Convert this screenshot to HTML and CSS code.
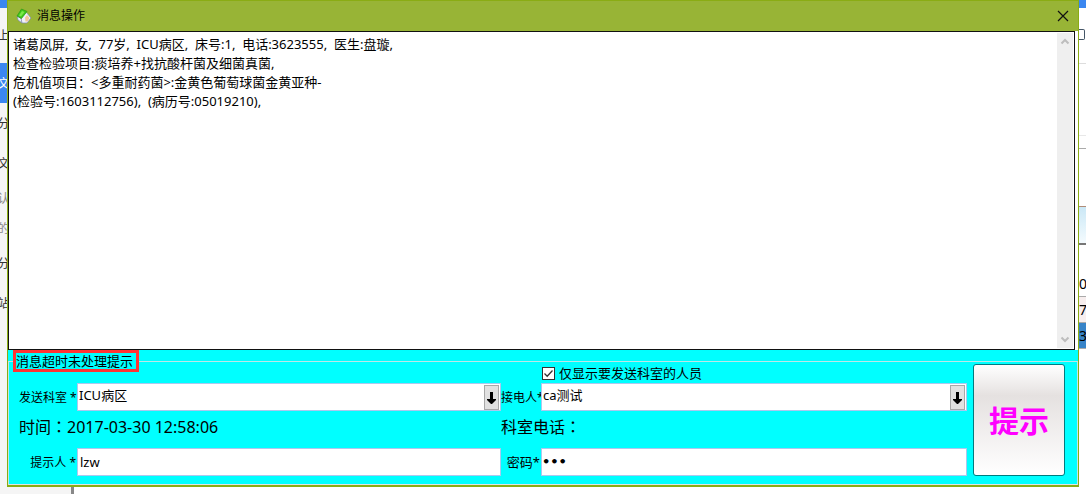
FILE: index.html
```html
<!DOCTYPE html>
<html lang="zh-CN">
<head>
<meta charset="utf-8">
<title>消息操作</title>
<link rel="stylesheet" href="styles.css">
</head>
<body>
<div class="desktop">
  <aside class="nav">
    <span class="nav-item nav-first">上</span>
    <span class="nav-item nav-active">文</span>
    <span class="nav-item">分</span>
    <span class="nav-item">文</span>
    <span class="nav-item nav-sub">认</span>
    <span class="nav-item nav-sub">的</span>
    <span class="nav-item">分</span>
    <span class="nav-item">站</span>
  </aside>
  <main class="dialog">
    <header class="titlebar">
      <svg class="logo" width="16" height="16" viewBox="0 0 16 16" aria-hidden="true">
        <path d="M1 8 6 11v4L2 12z" fill="#e6ecf8" stroke="#7c86a8" stroke-width=".7"/>
        <path d="M5 10 10 4l5 6-4 5H6z" fill="#eef1fa" stroke="#7c86a8" stroke-width=".7"/>
        <path d="M9 9.500 11 7l2.500 3-2 3.500H9.500z" fill="#f3c79b"/>
        <path d="M1 8 5.500 1 11 3.500 5.500 10.500z" fill="#3fc81c" stroke="#2c9a12" stroke-width=".7"/>
        <path d="M3 7.500 6 3l2.500 1L5 8.500z" fill="#7be84a"/>
      </svg>
      <h1 class="title">消息操作</h1>
      <button class="close" type="button" aria-label="关闭">
        <svg width="12" height="12" viewBox="0 0 12 12"><path d="M1 1 11 11M11 1 1 11" stroke="#111" stroke-width="1.200" fill="none"/></svg>
      </button>
    </header>
    <section class="message">
      <textarea class="message-text" readonly aria-label="消息内容">诸葛凤屏,  女,  77岁,  ICU病区,  床号:1,  电话:3623555,  医生:盘璇,
检查检验项目:痰培养+找抗酸杆菌及细菌真菌,
危机值项目：&lt;多重耐药菌&gt;:金黄色葡萄球菌金黄亚种-
(检验号:1603112756),  (病历号:05019210),</textarea>
      <div class="scrollbar">
        <svg width="10" height="8" viewBox="0 0 10 8"><path d="M1.500 6.500 5 3l3.500 3.500" stroke="#bdbdbd" stroke-width="2" fill="none"/></svg>
        <svg width="10" height="8" viewBox="0 0 10 8"><path d="M1.500 1.500 5 5l3.500-3.500" stroke="#bdbdbd" stroke-width="2" fill="none"/></svg>
      </div>
    </section>
    <form class="panel">
      <fieldset class="group">
        <legend class="legend">消息超时未处理提示</legend>
        <div class="content">
          <div class="fields">
            <div class="only">
              <span class="check">
                <input class="check-box" type="checkbox" id="only" checked>
                <svg class="check-mark" width="13" height="13" viewBox="0 0 13 13" aria-hidden="true"><path d="M2.500 6.500 5.200 9.200 10.500 3.500" stroke="#333" stroke-width="1.300" fill="none"/></svg>
              </span>
              <label for="only">仅显示要发送科室的人员</label>
            </div>
            <label class="label" for="dept">发送科室 *</label>
            <div class="combo">
              <select class="box select" id="dept"><option>ICU病区</option></select>
              <span class="arrow"><svg width="9" height="12" viewBox="0 0 9 12"><path d="M3 0h3v7h3v1L5 12H4L0 8V7h3z"/></svg></span>
            </div>
            <label class="label" for="person">接电人*</label>
            <div class="combo">
              <select class="box select" id="person"><option>ca测试</option></select>
              <span class="arrow"><svg width="9" height="12" viewBox="0 0 9 12"><path d="M3 0h3v7h3v1L5 12H4L0 8V7h3z"/></svg></span>
            </div>
            <p class="info">时间<span class="colon" lang="zh-TW">：</span>2017-03-30 12:58:06</p>
            <p class="info">科室电话<span class="colon" lang="zh-TW">：</span></p>
            <label class="label" for="user">提示人 *</label>
            <input class="box" id="user" type="text" value="lzw">
            <label class="label label-wide" for="pass">密码*</label>
            <input class="box pass" id="pass" type="password" value="123">
          </div>
          <button class="notify" type="button">提示</button>
        </div>
      </fieldset>
    </form>
  </main>
  <aside class="side">
    <div class="side-top"></div>
    <div class="side-tools"><span class="side-box"></span></div>
    <div class="side-list"></div>
    <div class="side-bar"></div>
    <div class="side-blank"></div>
    <div class="side-head"></div>
    <div class="side-row side-space"></div>
    <div class="side-row">0</div>
    <div class="side-row side-alt">7</div>
    <div class="side-row side-selected">3</div>
  </aside>
</div>
<footer class="under"><span class="under-nav"></span></footer>
</body>
</html>
```
FILE: styles.css
```css
* { box-sizing: border-box; }

body {
  margin: 0;
  min-height: 100vh;
  display: flex;
  flex-direction: column;
  background: #fff;
  color: #000;
  font: 13px/19px "Noto Sans", "Noto Sans CJK SC", sans-serif;
}

.desktop {
  flex: 1;
  display: grid;
  grid-template-columns: 7px minmax(0, 1fr) 7px;
}

.nav {
  display: flex;
  flex-direction: column;
  overflow: hidden;
  background: #f5f5f5;
  border-top: 8px solid #3b87f0;
}
.nav-item {
  display: flex;
  justify-content: center;
  align-items: center;
  height: 40px;
  font-size: 12px;
  color: #333;
}
.nav-first { height: 55px; }
.nav-active { background: #3b87f0; color: #fff; }
.nav-sub { height: 30px; color: #888; }

.dialog {
  display: flex;
  flex-direction: column;
  border: 1px solid #8aac14;
  border-bottom-width: 2px;
  background: #fff;
}

.titlebar {
  display: flex;
  align-items: center;
  gap: 5px;
  height: 30px;
  padding: 0 7px 1px 8px;
  background: #98b436;
}
.title {
  flex: 1;
  margin: 0;
  font-size: 12px;
  font-weight: 400;
}
.close {
  display: flex;
  padding: 2px;
  border: 0;
  background: none;
}

.message {
  flex: 1;
  display: flex;
  margin-right: 3px;
  padding: 1px;
  border: 1px solid #111;
  background: #fff;
}
.message-text {
  flex: 1;
  padding: 2px 3px;
  border: 0;
  resize: none;
  outline: 0;
  overflow: hidden;
  background: none;
  color: inherit;
  font: inherit;
}
.scrollbar {
  display: flex;
  flex-direction: column;
  justify-content: space-between;
  align-items: center;
  width: 16px;
  padding: 4px 0;
  background: #efefef;
}

.panel { background: #0ff; }
.group {
  margin: 0;
  min-width: 0;
  padding: 0 12px 8px 10px;
  border: 1px solid #bfe6e6;
  border-bottom-color: #e3e3e3;
}
.legend {
  margin-left: -6px;
  padding: 0 3px 0 0;
  border: 3px solid #f33;
  line-height: 16px;
}
.content {
  display: flex;
  gap: 6px;
  margin-top: -8px;
}
.fields {
  flex: 1;
  display: grid;
  grid-template-columns: 58px minmax(0, 212fr) 40px minmax(0, 213fr);
  grid-template-rows: 19px 28px 37px 28px;
  align-items: center;
}
.only {
  grid-column: 4;
  display: flex;
  align-items: center;
  gap: 4px;
  padding-left: 1px;
}
.check {
  display: grid;
}
.check-box, .check-mark { grid-area: 1 / 1; }
.check-box {
  appearance: none;
  width: 13px;
  height: 13px;
  margin: 0;
  border: 1px solid #333;
  background: #fff;
}
.check-mark { pointer-events: none; }
.label {
  font-size: 12px;
  text-align: right;
  white-space: nowrap;
  padding-right: 1px;
}
.label-wide { font-size: 13px; }
.box {
  width: 100%;
  height: 28px;
  padding: 0 2px;
  border: 1px solid #abc8ee;
  border-radius: 0;
  background: #fff;
  color: #000;
  font: inherit;
}
.pass {
  padding: 0 0 2px;
  font: 700 13px/20px "DejaVu Sans", sans-serif;
}
.combo {
  position: relative;
}
.select {
  display: block;
  appearance: none;
  padding: 0 18px 4px 1px;
}
.arrow {
  position: absolute;
  top: 2px;
  right: 2px;
  bottom: 1px;
  width: 15px;
  display: flex;
  align-items: center;
  justify-content: center;
  border: 1px solid #a8a8a8;
  background: #e1e1e1;
  pointer-events: none;
}
.info {
  grid-column: span 2;
  margin: 0;
  padding-bottom: 5px;
  font-size: 16px;
}
.colon {
  font-family: "Noto Sans CJK TC", sans-serif;
}
.notify {
  width: 92px;
  padding: 0 0 2px;
  border: 1px solid #007c80;
  border-radius: 3px;
  background: linear-gradient(#fff, #e5e1e0 28%, #fff);
  color: #f0f;
  font: 700 30px/40px "Noto Sans CJK SC", sans-serif;
}

.side {
  display: flex;
  flex-direction: column;
  overflow: hidden;
  background: #fff;
}
.side-top { height: 8px; background: #3b87f0; }
.side-tools {
  height: 56px;
  padding-top: 21px;
  border-bottom: 1px solid #ddd;
}
.side-box {
  display: block;
  width: 6px;
  height: 11px;
  border: 1px solid #456;
  border-left: 0;
  border-radius: 0 2px 2px 0;
}
.side-list { height: 72px; border-bottom: 1px solid #e8e8e8; }
.side-bar { height: 13px; border-bottom: 1px solid #aaa; }
.side-blank { height: 57px; }
.side-head {
  height: 39px;
  border-top: 1px solid #b08c78;
  border-bottom: 2px solid #777;
  background: linear-gradient(#cbe8f6, #f4fbfe);
}
.side-row {
  height: 26px;
  border-bottom: 1px solid #aaa;
  font-size: 14px;
  line-height: 25px;
}
.side-space { border: 0; }
.side-alt { background: #f7eeee; }
.side-selected { background: #3884c8; }

.under {
  display: flex;
  height: 7px;
}
.under-nav {
  width: 74px;
  background: #f5f5f5;
  border-right: 3px solid #888;
}
```
